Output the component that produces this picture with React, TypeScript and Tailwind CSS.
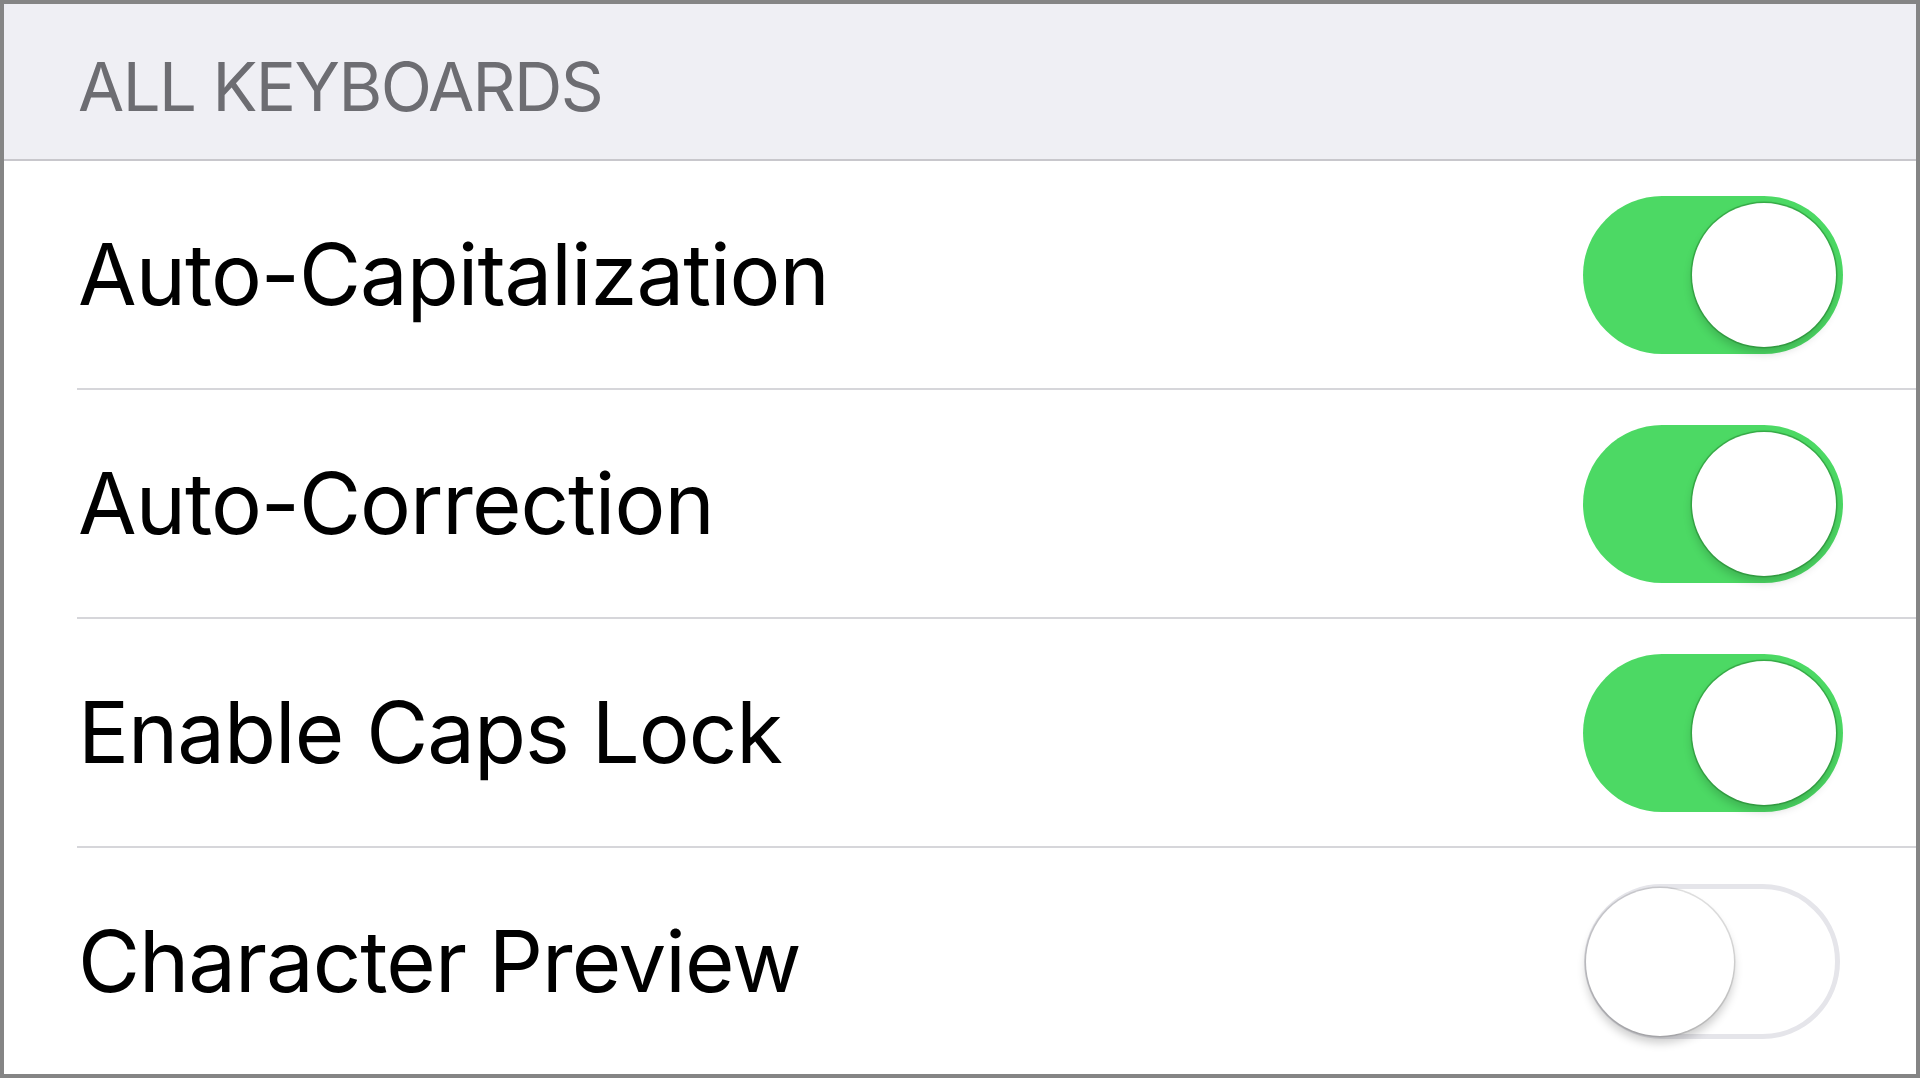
import React from "react";

function Toggle({ on }: { on: boolean }) {
  if (on) {
    return (
      <div className="relative w-[260px] h-[158px] rounded-full bg-[#4cd964] shrink-0">
        <div className="absolute right-[7px] top-[7px] w-[144px] h-[144px] rounded-full bg-white shadow-[0_0_0_1.5px_rgba(30,120,40,0.45),0_6px_10px_rgba(0,0,0,0.18)]" />
      </div>
    );
  }
  return (
    <div className="relative w-[256px] h-[155px] rounded-full bg-white border-[5px] border-[#e5e5ea] shrink-0">
      <div className="absolute left-[-3px] top-[-1px] w-[148px] h-[148px] rounded-full bg-white shadow-[0_0_0_1.5px_rgba(0,0,0,0.12),0_7px_10px_rgba(0,0,0,0.2)]" />
    </div>
  );
}

const rows = [
  { label: "Auto-Capitalization", on: true },
  { label: "Auto-Correction", on: true },
  { label: "Enable Caps Lock", on: true },
  { label: "Character Preview", on: false },
];

export default function App() {
  return (
    <div
      className="w-[1920px] h-[1078px] border-[4px] border-[#858585] bg-white flex flex-col overflow-hidden"
      style={{ fontFamily: "Inter, 'Noto Sans', sans-serif" }}
    >
      <div className="h-[157px] shrink-0 bg-[#efeff4] border-b-2 border-[#c8c7cc] flex items-end pl-[74px] pb-[39px]">
        <span className="text-[67px] leading-none text-[#6d6d72] tracking-[-1.6px]">ALL KEYBOARDS</span>
      </div>
      {rows.map((r, i) => (
        <div key={r.label} className="pl-[73px] shrink-0">
          <div
            className={
              i < rows.length - 1
                ? "h-[229px] flex items-center justify-between pr-[73px] border-b-2 border-[#d6d6da]"
                : "h-[226px] flex items-center justify-between pr-[76px]"
            }
          >
            <span className="pl-[1px] text-[85px] leading-none text-black tracking-[-1px]">{r.label}</span>
            <Toggle on={r.on} />
          </div>
        </div>
      ))}
    </div>
  );
}
